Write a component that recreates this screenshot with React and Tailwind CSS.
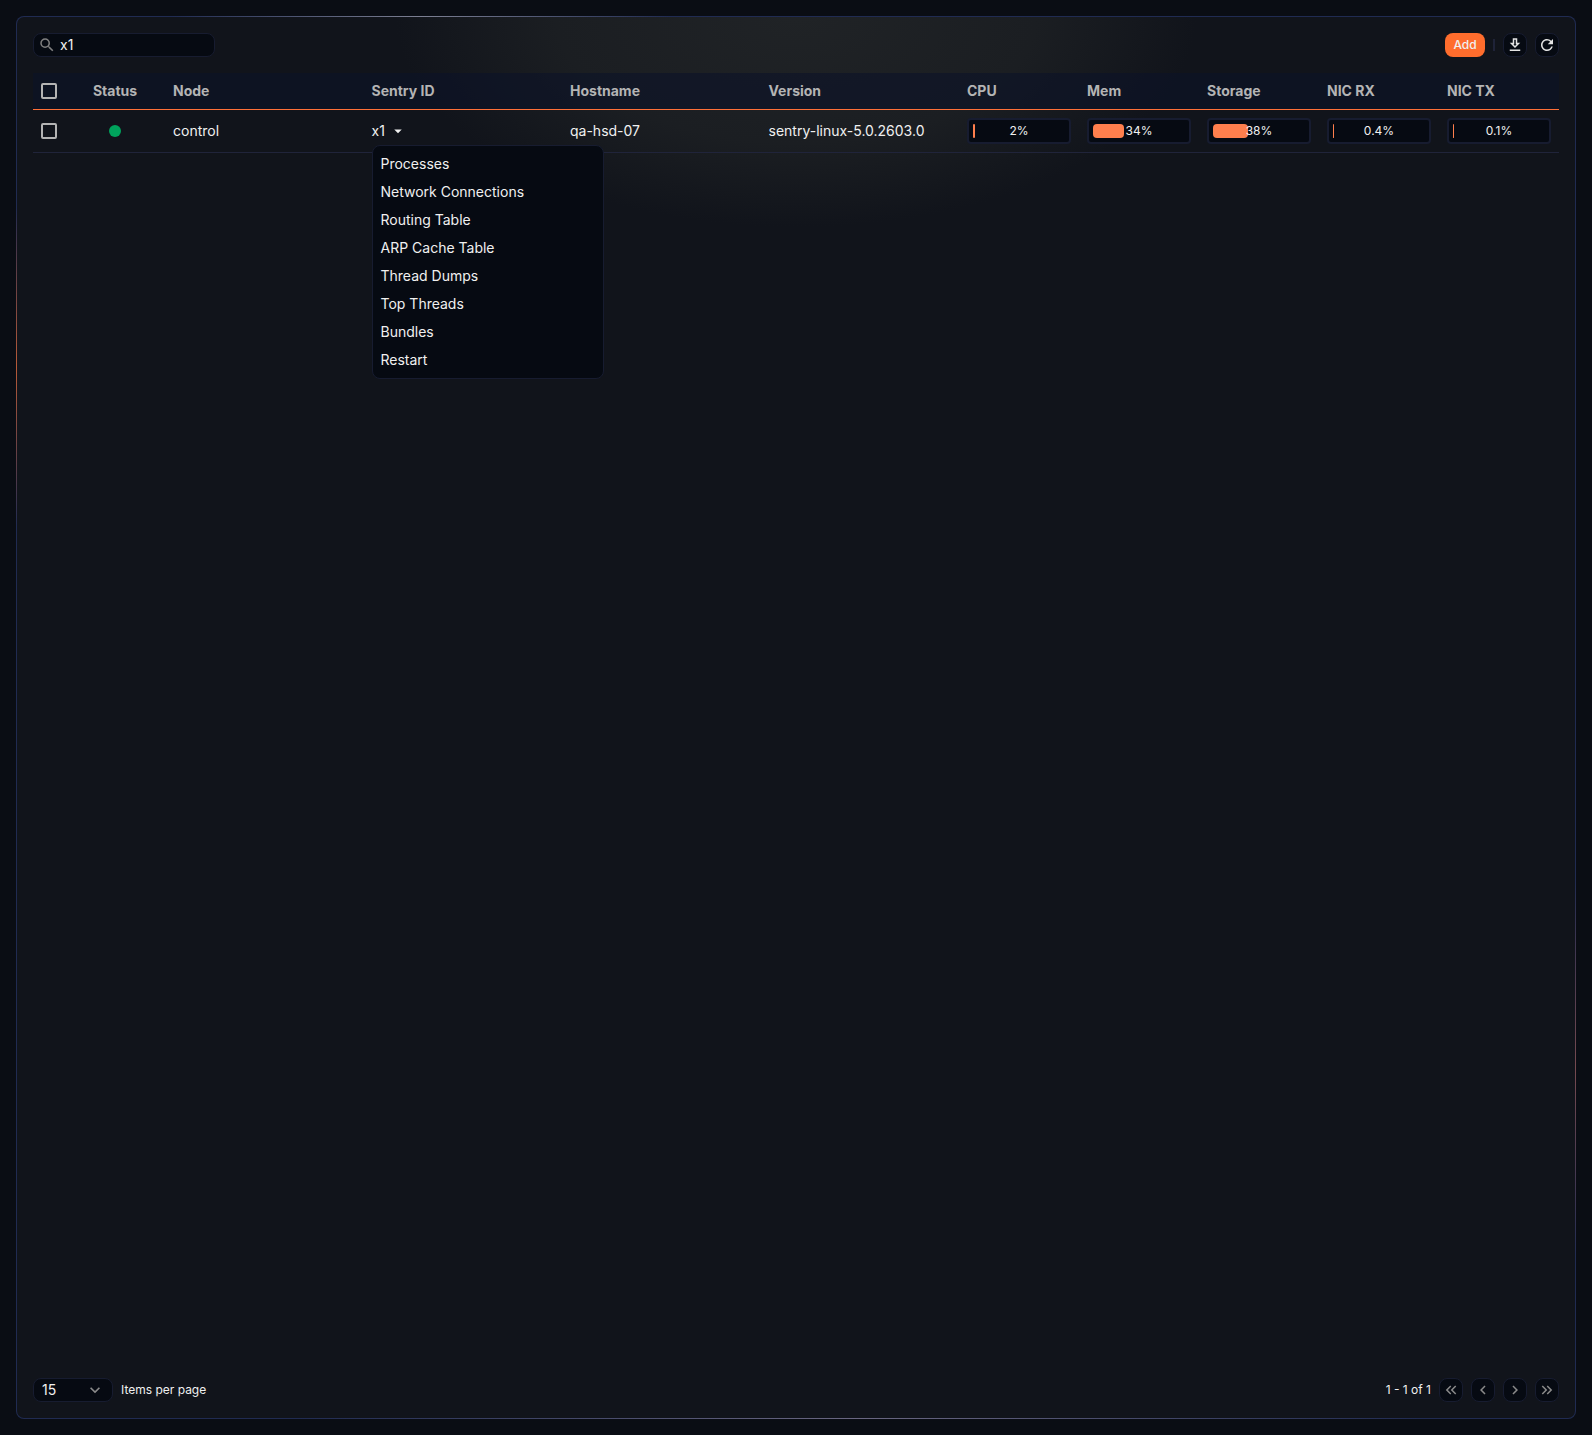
import React, { useState } from 'react';
import {
  MdSearch,
  MdArrowDropDown,
  MdOutlineDownload,
  MdRefresh,
  MdKeyboardArrowDown,
  MdChevronLeft,
  MdChevronRight,
  MdKeyboardDoubleArrowLeft,
  MdKeyboardDoubleArrowRight,
} from 'react-icons/md';

const sentries = [
  {
    node: 'control',
    id: 'x1',
    hostname: 'qa-hsd-07',
    version: 'sentry-linux-5.0.2603.0',
    usage: [2, 34, 38, 0.4, 0.1],
  },
];

const usageColumns = ['CPU', 'Mem', 'Storage', 'NIC RX', 'NIC TX'];

const menuItems = [
  'Processes',
  'Network Connections',
  'Routing Table',
  'ARP Cache Table',
  'Thread Dumps',
  'Top Threads',
  'Bundles',
  'Restart',
];

// Small square button used in the toolbar and the pager
function IconButton({ label, disabled, children }) {
  return (
    <button
      type="button"
      aria-label={label}
      disabled={disabled}
      className="flex size-6 items-center justify-center rounded-lg border border-[#171c30] bg-[#060a12] text-[#e4e4e4] disabled:text-[#8a8a8a]"
    >
      {children}
    </button>
  );
}

function Checkbox({ label }) {
  return (
    <input
      type="checkbox"
      aria-label={label}
      className="block size-4 appearance-none rounded-xs border-2 border-[#b4b4b4] checked:bg-[#ff6d2d]"
    />
  );
}

function UsageBar({ value }) {
  return (
    <div className="flex h-[26px] items-center rounded-sm border-2 border-[#171c30] bg-[#060a12] px-1">
      <div className="relative h-[14px] w-full">
        <div className="h-full min-w-px rounded-sm bg-[#ff7f4d]" style={{ width: `${value}%` }} />
        <span className="absolute inset-0 flex items-center justify-center text-xs text-[#f0f0f0]">{value}%</span>
      </div>
    </div>
  );
}

function SentryMenu({ id }) {
  const [open, setOpen] = useState(true);

  return (
    <div className="relative">
      <button type="button" onClick={() => setOpen(!open)} className="flex items-center gap-1">
        {id}
        <MdArrowDropDown className="size-[18px]" />
      </button>
      {open && (
        <ul className="absolute top-full left-0 z-10 mt-1 w-[232px] rounded-lg border border-[#171c30] bg-[#060a12] py-1">
          {menuItems.map((item) => (
            <li key={item}>
              <button type="button" className="flex h-7 w-full items-center px-2 text-left hover:bg-[#171c30]">
                {item}
              </button>
            </li>
          ))}
        </ul>
      )}
    </div>
  );
}

function SentryTable() {
  return (
    <table className="w-full table-fixed border-collapse text-left text-sm">
      <thead>
        <tr className="h-9 border-b border-[#ff7038] bg-[#0c1228]/60 text-[#b4b4b4]">
          <th className="w-8 px-2"><Checkbox label="Select all" /></th>
          <th className="w-[100px] px-2 text-center font-bold">Status</th>
          <th className="px-2 font-bold">Node</th>
          <th className="px-2 font-bold">Sentry ID</th>
          <th className="px-2 font-bold">Hostname</th>
          <th className="px-2 font-bold">Version</th>
          {usageColumns.map((name) => (
            <th key={name} className="w-[120px] px-2 font-bold">{name}</th>
          ))}
        </tr>
      </thead>
      <tbody>
        {sentries.map((sentry) => (
          <tr key={sentry.id} className="h-[43px] border-b border-[#20243a] text-[#f0f0f0]">
            <td className="px-2"><Checkbox label={`Select ${sentry.id}`} /></td>
            <td className="px-2">
              <div role="img" aria-label="Online" className="mx-auto size-3 rounded-full bg-[#00a35c]" />
            </td>
            <td className="px-2">{sentry.node}</td>
            <td className="px-2"><SentryMenu id={sentry.id} /></td>
            <td className="px-2">{sentry.hostname}</td>
            <td className="px-2">{sentry.version}</td>
            {sentry.usage.map((value, i) => (
              <td key={usageColumns[i]} className="px-2"><UsageBar value={value} /></td>
            ))}
          </tr>
        ))}
      </tbody>
    </table>
  );
}

// Panel whose 1px border lights up at one spot on each side
function GlowPanel({ children }) {
  return (
    <div className="flex flex-1 rounded-lg bg-[#202b52] bg-[radial-gradient(250px_60px_at_26%_0px,#7c7f92,transparent),radial-gradient(60px_160px_at_0px_25%,#b85a38,transparent),radial-gradient(60px_190px_at_100%_75%,#764a50,transparent),radial-gradient(560px_60px_at_54%_100%,#6a6782,transparent)] p-px">
      <main className="flex flex-1 flex-col rounded-[7px] bg-[#11141b] bg-[radial-gradient(400px_210px_at_50%_0px,#202326,#1b1e22_60%,#11141b)] p-4">
        {children}
      </main>
    </div>
  );
}

function App() {
  const [search, setSearch] = useState('x1');

  return (
    <div className="flex min-h-screen bg-[#0a0d14] p-4 font-['Inter',sans-serif]">
      <GlowPanel>
        <div className="flex items-center justify-between">
          <label className="flex h-6 w-[182px] items-center gap-1 rounded-lg border border-[#171c30] bg-[#060a12] px-1">
            <MdSearch className="size-[18px] shrink-0 text-[#808080]" />
            <input
              type="text"
              aria-label="Search"
              value={search}
              onChange={(e) => setSearch(e.target.value)}
              className="w-full min-w-0 text-sm text-[#f0f0f0] outline-none"
            />
          </label>
          <div className="flex items-center gap-2">
            <button type="button" className="h-6 w-10 rounded-lg bg-[#ff6d2d] text-xs font-medium text-[#f0f0f0]">Add</button>
            <div className="h-3 w-0.5 bg-[#1f2338]" />
            <IconButton label="Download"><MdOutlineDownload className="size-[18px]" /></IconButton>
            <IconButton label="Refresh"><MdRefresh className="size-[18px]" /></IconButton>
          </div>
        </div>

        <div className="mt-4 flex-1">
          <SentryTable />
        </div>

        <div className="flex items-center justify-between text-xs text-[#f0f0f0]">
          <label className="flex items-center gap-2">
            <span className="relative">
              <select
                defaultValue="15"
                className="h-6 w-20 appearance-none rounded-lg border border-[#171c30] bg-[#060a12] px-2 text-sm"
              >
                <option>15</option>
                <option>30</option>
                <option>50</option>
              </select>
              <MdKeyboardArrowDown className="pointer-events-none absolute top-0.5 right-2 size-5 text-[#8a8a8a]" />
            </span>
            Items per page
          </label>
          <nav className="flex items-center gap-2">
            <span>1 - 1 of 1</span>
            <IconButton label="First page" disabled><MdKeyboardDoubleArrowLeft className="size-[18px]" /></IconButton>
            <IconButton label="Previous page" disabled><MdChevronLeft className="size-[18px]" /></IconButton>
            <IconButton label="Next page" disabled><MdChevronRight className="size-[18px]" /></IconButton>
            <IconButton label="Last page" disabled><MdKeyboardDoubleArrowRight className="size-[18px]" /></IconButton>
          </nav>
        </div>
      </GlowPanel>
    </div>
  );
}

export default App;
